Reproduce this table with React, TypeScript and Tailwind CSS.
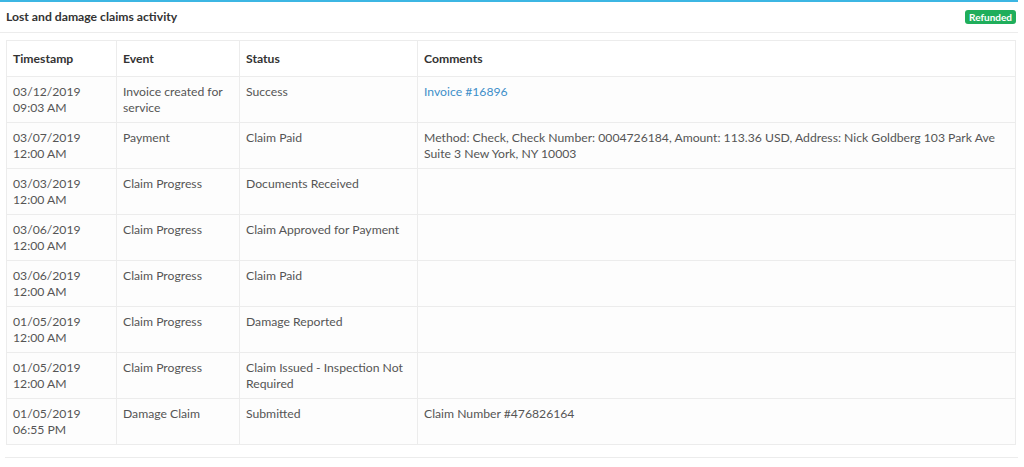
import React from "react";

const rows: { ts: [string, string]; event: string; status: string; comment?: string; link?: boolean }[] = [
  { ts: ["03/12/2019", "09:03 AM"], event: "Invoice created for service", status: "Success", comment: "Invoice #16896", link: true },
  { ts: ["03/07/2019", "12:00 AM"], event: "Payment", status: "Claim Paid", comment: "Method: Check, Check Number: 0004726184, Amount: 113.36 USD, Address: Nick Goldberg 103 Park Ave Suite 3 New York, NY 10003" },
  { ts: ["03/03/2019", "12:00 AM"], event: "Claim Progress", status: "Documents Received" },
  { ts: ["03/06/2019", "12:00 AM"], event: "Claim Progress", status: "Claim Approved for Payment" },
  { ts: ["03/06/2019", "12:00 AM"], event: "Claim Progress", status: "Claim Paid" },
  { ts: ["01/05/2019", "12:00 AM"], event: "Claim Progress", status: "Damage Reported" },
  { ts: ["01/05/2019", "12:00 AM"], event: "Claim Progress", status: "Claim Issued - Inspection Not Required" },
  { ts: ["01/05/2019", "06:55 PM"], event: "Damage Claim", status: "Submitted", comment: "Claim Number #476826164" },
];

export default function App() {
  return (
    <div className="w-[1024px] h-[467px] bg-white overflow-hidden" style={{ fontFamily: "Lato, 'Open Sans', sans-serif" }}>
      <div className="w-[1018px] border-t-2 border-[#3cb6e3]">
        <div className="h-[31px] flex items-center justify-between pl-[6px] pr-[2px] border-b border-[#ececec]">
          <span className="text-[12.2px] font-bold text-[#333]">Lost and damage claims activity</span>
          <span className="bg-[#1fae5b] text-white text-[10px] font-bold leading-[14px] px-[4px] rounded-[3px]">Refunded</span>
        </div>
        <div className="pl-[6px] pr-[2px] pt-[7px]">
          <table className="w-full border-collapse text-[12.2px] leading-[16px] text-[#555] table-fixed">
            <colgroup>
              <col className="w-[110px]" />
              <col className="w-[123px]" />
              <col className="w-[178px]" />
              <col />
            </colgroup>
            <thead>
              <tr>
                {["Timestamp", "Event", "Status", "Comments"].map((h) => (
                  <th key={h} className="text-left font-bold text-[#333] border border-[#ececec] px-[6px] pt-[10px] pb-[9px]">
                    {h}
                  </th>
                ))}
              </tr>
            </thead>
            <tbody>
              {rows.map((r, i) => (
                <tr key={i} className="bg-[#fdfdfd]">
                  <td className="align-top border border-[#ececec] px-[6px] pt-[7px] pb-[6px] h-[46px]">
                    {r.ts[0]}
                    <br />
                    {r.ts[1]}
                  </td>
                  <td className="align-top border border-[#ececec] px-[6px] pt-[7px] pb-[6px]">{r.event}</td>
                  <td className="align-top border border-[#ececec] px-[6px] pt-[7px] pb-[6px]">{r.status}</td>
                  <td className="align-top border border-[#ececec] px-[6px] pt-[7px] pb-[6px]">
                    {r.comment ? (
                      r.link ? <span className="text-[#3d8fc9]">{r.comment}</span> : r.comment
                    ) : null}
                  </td>
                </tr>
              ))}
            </tbody>
          </table>
        </div>
        <div className="mt-[12px] ml-[5px] border-t border-[#ececec]" />
      </div>
    </div>
  );
}
